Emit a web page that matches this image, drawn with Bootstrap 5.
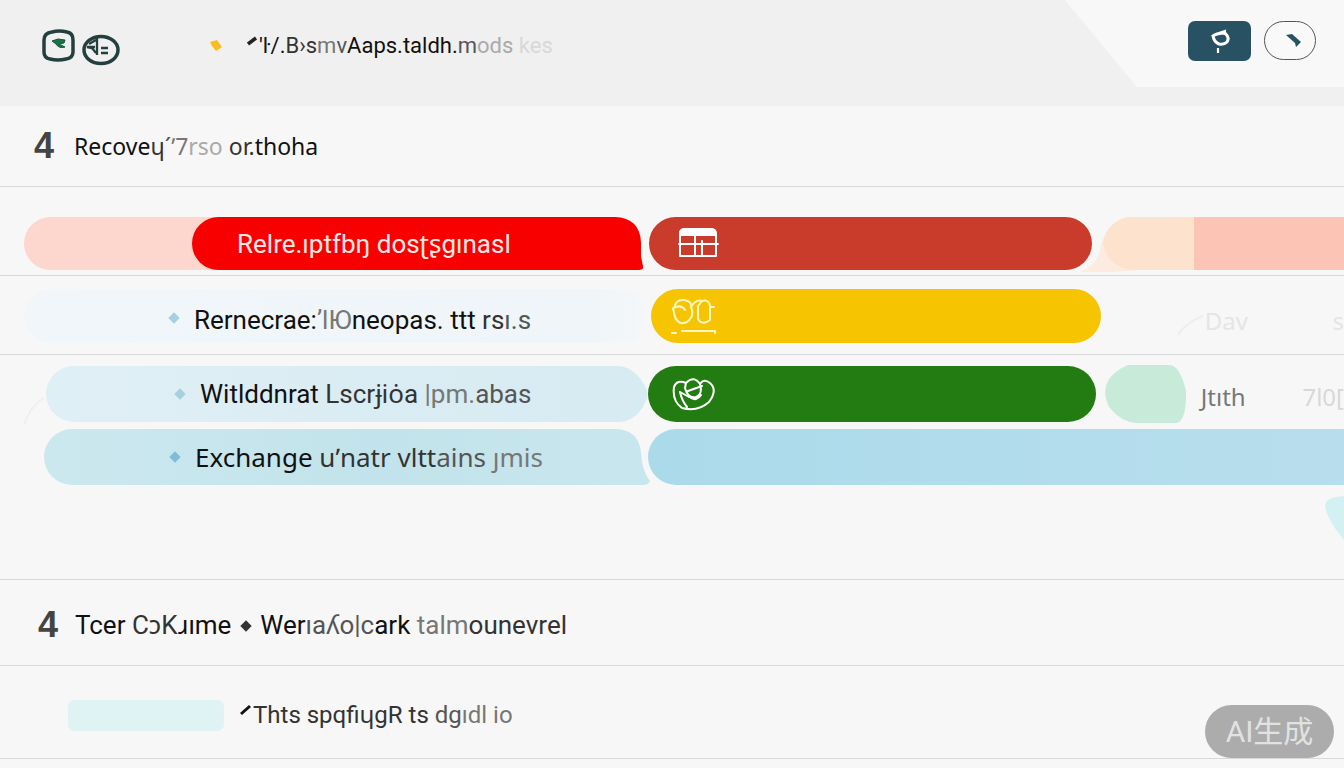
<!DOCTYPE html>
<html lang="en">
<head>
<meta charset="utf-8">
<meta name="viewport" content="width=device-width, initial-scale=1">
<title>Schedule</title>
<link href="https://cdn.jsdelivr.net/npm/bootstrap@5.3.0/dist/css/bootstrap.min.css" rel="stylesheet">
<style>
body{background:#f7f7f7;color:#111;font-family:Roboto,"Noto Sans","Noto Sans CJK SC",sans-serif;overflow-x:hidden}
.page{position:relative;min-height:100vh;overflow:hidden}
.topbar{background:#f0f0f0;height:106px;padding:21px 28px 0 42px;position:relative}
.topbar .wedge{position:absolute;top:0;right:0;width:280px;height:88px}
.topbar .front{position:relative}
.brand-icons{width:174px;margin-top:8px}
.spark{margin:18px 24px 0 -6px}
.tick{margin:14px 0 0 1px}
.headline{font-size:22px;line-height:32px;margin:9px 0 0;font-weight:400;white-space:pre}
.btn-key{width:63px;height:40px;border-radius:7px;background:#285264;border:0}
.btn-ring{width:52px;height:39px;border-radius:20px;border:1px solid #555;background:#f9f9f9}
.sec{display:flex;align-items:center;border-bottom:1px solid #d9d9d9;padding-left:34px;height:81px}
.sec.second{height:86px;padding:4px 0 0 38px}
.sec h2{font-size:26px;line-height:32px;margin:0;font-weight:400;white-space:pre}
.sec h2.wide{font-family:"Noto Sans",sans-serif;font-size:23px}
.sec .num{font:700 36px/40px "Liberation Sans",sans-serif;color:#444;width:40px}
.sec.second .num{width:37px}
.lane{display:grid;grid-template-columns:48.2% 34% 1fr;border-bottom:1px solid #d9d9d9;white-space:pre;font-size:26px;line-height:32px}
.lane.bare{border-bottom:0}
.lane>div{min-width:0}
.noto{font-family:"Noto Sans",sans-serif}
.bar{height:54px;display:flex;align-items:center}
.bar.tall{height:56px}
.fillbar{flex:1;height:100%;display:flex;align-items:center;border-radius:28px}
.open-end{border-radius:28px 0 0 28px}
.cap{width:40px;height:100%;flex:none;margin-left:-1px}
.gem{width:8px;height:8px;transform:rotate(45deg);flex:none;background:#a5d0e0;margin-right:16px}
.gem.dark{background:#333;margin:0 4px 4px}
.icon{width:46px;height:42px;margin-left:26px;fill:none;stroke:#fff;stroke-width:2;stroke-linecap:round;stroke-linejoin:round}
.g1{color:#333}.g2{color:#555}.g3{color:#777}.g4{color:#aaa}.g5{color:#d8d8d8}
.ghost{color:#e5e5e5}
.side{font-size:24px}
.drop{position:absolute;right:0;top:496px;width:20px;height:44px}
.swatch{width:156px;height:31px;border-radius:7px;background:#dff2f4}
.note{height:93px;padding:6px 0 0 68px;border-bottom:1px solid #d9d9d9}
.note span{font-size:24px;white-space:pre}
.stamp{position:absolute;right:10px;bottom:10px;background:#acacac;color:#e2e2e2;border-radius:27px;width:129px;height:53px;font:400 30px/54px Roboto,"Noto Sans CJK SC",sans-serif;text-align:center}
</style>
</head>
<body>
<div class="page">
<header class="topbar">
  <svg class="wedge" viewBox="0 0 280 88" aria-hidden="true"><path d="M1 0H280V87H73Z" fill="#f8f8f8"/></svg>
  <div class="front d-flex align-items-start">
    <div class="brand-icons">
      <svg width="80" height="40" viewBox="0 0 80 40" fill="none" stroke="#233f3e" stroke-width="3.5" aria-hidden="true">
        <path d="M10 3Q17 1 25 3Q31 4 31 11V23Q31 29 24 30Q16 32 8 30Q2 29 2 23V11Q2 4 10 3Z"/>
        <path d="M10 12L16 10L23 11L22 14L17 15L23 18Q17 20 14 15Z" fill="#167545" stroke="#17593c" stroke-width="1"/>
        <ellipse cx="59" cy="21" rx="17" ry="13.5"/>
        <path d="M45 18H53M55 9V26M45 18L50 19L54 24M47 15L54 11M59 19H66M59 24H66" stroke-width="2.3"/>
      </svg>
    </div>
    <div class="d-flex align-items-start flex-grow-1">
      <svg class="spark" width="12" height="12" viewBox="0 0 12 12" aria-hidden="true"><path d="M0 3L7 1L12 8L6 12L2 7Z" fill="#fbbc22"/></svg>
      <svg class="tick" width="12" height="12" viewBox="0 0 12 12" aria-hidden="true"><path d="M1 9L9 3" stroke="#222" stroke-width="3.5"/></svg>
      <h1 class="headline">'ŀ/.<span class="g1">B›s</span><span class="g3">m</span><span class="g2">v</span>Aaps.taldh.<span class="g2">m</span><span class="g4">ods</span><span class="g5"> kes</span></h1>
    </div>
    <div class="d-flex" style="gap:13px">
      <button type="button" class="btn-key p-0" aria-label="Locate"><svg width="30" height="30" viewBox="0 0 30 30" fill="none" stroke="#fff" aria-hidden="true"><path d="M8 10Q12 7 20 7Q25 12 22 16Q19 19 14 18Q9 16 8 10Z" stroke-width="3"/><path d="M14 7L20 5V9" stroke-width="2"/><path d="M13 22V27" stroke-width="2.2"/></svg></button>
      <button type="button" class="btn-ring p-0" aria-label="Edit"><svg width="24" height="24" viewBox="0 0 24 24" aria-hidden="true"><path d="M8 6L14 5L23 13L18 18L17 14Z" fill="#285264"/></svg></button>
    </div>
  </div>
</header>

<section class="sec"><span class="num">4</span><h2 class="wide">Recove<span class="g1">ɥ</span><span class="g2">´</span><span class="g3">ʼ7</span><span class="g4">rso</span> <span class="g1">or.</span>thoha</h2></section>

<div class="lane" style="padding:30px 0 5px">
  <div class="bar" style="height:53px;padding-left:24px;padding-right:5px">
    <div class="fillbar open-end" style="background:#fdd7cd">
      <div class="fillbar open-end" style="background:#f80000;margin-left:168px;color:#ffe9e4;padding-left:45px">Relre.ıptfbŋ dosʈʂgınasl</div>
    </div>
    <svg class="cap" viewBox="0 0 40 54" preserveAspectRatio="none" aria-hidden="true"><path d="M0 0H12Q37 1 38 26L38 40L40 50Q41 54 36 54H0Z" fill="#f80000"/></svg>
  </div>
  <div class="bar" style="height:53px;padding-left:1px;padding-right:13px"><div class="fillbar" style="background:#c93b2b">
    <svg class="icon" viewBox="0 0 46 42" aria-hidden="true"><path d="M5 9Q6 6 10 6H36Q41 6 41 11V33H5ZM4 21H43M20 12V33M27 18V33"/><path d="M5 12Q5 6 10 6H36Q41 7 41 12Z" fill="#fff"/></svg>
  </div></div>
  <div class="bar" style="height:53px">
    <svg style="width:60px;height:59px;margin-left:-26px;margin-right:-1px;flex:none" viewBox="0 0 60 60" aria-hidden="true"><path d="M22 30Q31 6 51 3L60 57L33 59H0Q20 53 22 30Z" fill="#fdebe2"/><path d="M60 3H48Q27 9 24 30Q27 51 50 57H60Z" fill="#fde2cd"/></svg>
    <div class="h-100" style="width:56px;background:#fde2cd"></div><div class="h-100 flex-grow-1" style="background:#fbc4b4"></div>
  </div>
</div>

<div class="lane" style="padding:13px 0 11px">
  <div class="bar" style="padding-left:24px"><div class="fillbar" style="background:linear-gradient(90deg,#f0f6f9,#eff5f8 90%,#f5f7f8)">
    <span class="gem" style="margin-left:146px;margin-top:4px"></span><span class="pt-2">Rernecrae:<span class="g3">ʼlЮ</span>neopas. ttt<span class="g1"> rs</span><span class="g2">ı.s</span></span>
  </div></div>
  <div class="bar" style="padding-left:3px;padding-right:4px"><div class="fillbar" style="background:#f6c400">
    <svg class="icon" style="margin-left:20px" viewBox="0 0 46 42" aria-hidden="true"><path d="M3 13Q5 4 13 5Q21 6 20 12Q24 21 16 27Q8 31 4 22L2 13ZM3 13Q10 9 14 15M20 12Q25 4 31 6L27 11V24Q31 31 39 25V12H43M31 6Q38 4 39 11M11 36H44V38M0 38H5" stroke="#fff7c2"/></svg>
  </div></div>
  <div class="bar side ghost" style="padding-top:10px">
    <svg width="30" height="36" viewBox="0 0 30 36" style="margin-left:70px;flex:none" aria-hidden="true"><path d="M3 32Q10 20 28 13" fill="none" stroke="#eee" stroke-width="2"/></svg><span class="noto">Dav</span><span class="noto ms-auto">s</span>
  </div>
</div>

<div class="lane bare" style="padding-top:11px">
  <div class="bar tall">
    <svg width="24" height="44" viewBox="0 0 24 44" style="margin-left:22px;flex:none;margin-top:36px" aria-hidden="true"><path d="M2 35Q8 16 22 8" fill="none" stroke="#efefef" stroke-width="2"/></svg>
    <div class="fillbar open-end" style="background:linear-gradient(90deg,#dfeff5,#d7ebf2)">
    <span class="gem" style="margin-left:130px"></span><span>Witlddnrat <span class="g1">Lscrɉiȯa</span><span class="g3"> |pm.</span><span class="g2">abas</span></span></div>
    <svg class="cap" viewBox="0 0 40 56" preserveAspectRatio="none" aria-hidden="true"><path d="M0 0H11Q29 2 39 24V32Q31 54 12 56H0Z" fill="#d7ebf2"/></svg>
  </div>
  <div class="bar tall" style="padding-right:9px"><div class="fillbar" style="background:#237c12">
    <svg class="icon" style="margin-left:22px" viewBox="0 0 46 42" aria-hidden="true"><path d="M16 10Q7 6 4 14Q2 28 12 35Q28 39 39 29Q48 17 40 10Q34 5 30 11Q24 2 16 10L15 15Q18 26 26 24Q33 21 30 11M10 19L19 24M10 19Q12 28 17 34M18 18L32 13M19 23Q25 30 31 22"/></svg>
  </div></div>
  <div class="bar tall side">
    <svg width="83" height="58" viewBox="0 0 83 58" style="margin-left:-1px;flex:none" aria-hidden="true"><path d="M24 0H66Q76 1 82 26L82 34Q81 57 72 58H32Q17 57 5 42Q-8 14 24 0Z" fill="#c7ead9"/></svg>
    <span class="g3 noto" style="margin-left:14px;padding-top:6px">Jtıth</span><span class="g5 noto ms-auto" style="padding-top:6px">7l0[</span>
  </div>
</div>

<div class="lane" style="padding:7px 0 94px">
  <div class="bar tall" style="padding-left:44px"><div class="fillbar open-end" style="background:linear-gradient(90deg,#cce8ef,#c2e3eb 60%,#c8e6ee)">
    <span class="gem" style="margin-left:127px;background:#7fbcd8"></span><span class="noto">Exchange <span class="g1">uʼnatr</span> <span class="g1">vltt</span><span class="g2">ains</span> <span class="g3">ȷmis</span></span></div>
    <svg class="cap" style="margin-right:-2px" viewBox="0 0 40 56" preserveAspectRatio="none" aria-hidden="true"><path d="M0 0H6Q29 1 31 24Q32 42 40 52Q39 56 32 56H0Z" fill="#c8e6ee"/></svg>
  </div>
  <div class="bar tall" style="grid-column:span 2"><div class="fillbar open-end" style="background:linear-gradient(90deg,#abdaea,#b8deed)"></div></div>
</div>
<svg class="drop" viewBox="0 0 20 44" aria-hidden="true"><path d="M20 0Q1 1 1 10Q3 24 20 44Z" fill="#d3f1f2"/></svg>

<section class="sec second"><span class="num">4</span><h2>Tcer <span class="g1">CɔK</span>ɹıme <span class="gem dark d-inline-block"></span> Wer<span class="g2">ıaʎo|c</span>ark <span class="g3">talm</span><span class="g1">ounevrel</span></h2></section>

<div class="note d-flex align-items-center">
  <div class="swatch"></div>
  <svg width="14" height="14" viewBox="0 0 14 14" style="margin-left:15px;margin-top:-8px" aria-hidden="true"><path d="M2 10L11 2" stroke="#111" stroke-width="3"/></svg>
  <span class="g1">Thts spqfiɥgR ts <span class="g2">dg</span><span class="g3">ıdl io</span></span>
</div>
<div class="stamp">AI生成</div>
</div>
<script src="https://cdn.jsdelivr.net/npm/bootstrap@5.3.0/dist/js/bootstrap.bundle.min.js"></script>
</body>
</html>
